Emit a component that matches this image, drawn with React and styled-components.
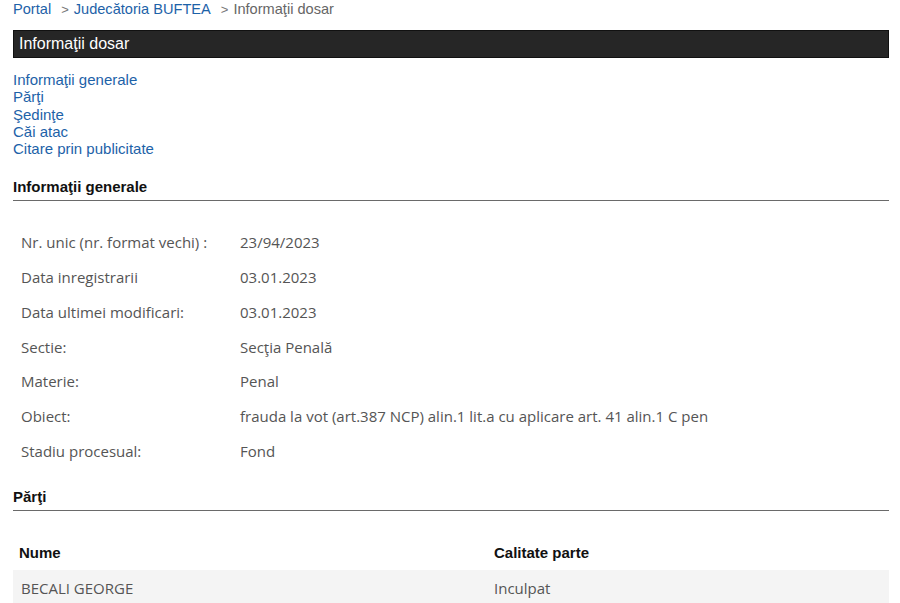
import React from 'react';
import styled, { createGlobalStyle } from 'styled-components';

const GlobalStyle = createGlobalStyle`
  html, body {
    margin: 0;
    padding: 0;
    background: #fff;
  }
  body {
    font-family: "Liberation Sans", Arial, sans-serif;
  }
`;

const Page = styled.div`
  width: 876px;
  padding: 0 11px 0 13px;
  height: 603px;
  overflow: hidden;
`;

const Breadcrumb = styled.div`
  display: flex;
  align-items: baseline;
  gap: 5px;
  padding-top: 1px;
  height: 29px;
  font-size: 14.6px;
  color: #666;
  a {
    color: #1d62a8;
    text-decoration: none;
  }
`;

const Sep = styled.span`
  color: #777;
  font-size: 13px;
  margin-left: 5px;
`;

const TitleBar = styled.div`
  background: #262626;
  border: 1px solid #111;
  color: #fff;
  height: 26px;
  line-height: 26px;
  padding: 0 5px;
  font-size: 16px;
`;

const Menu = styled.ul`
  list-style: none;
  margin: 13px 0 0;
  padding: 0;
  li {
    font-size: 15px;
    line-height: 17.3px;
  }
  a {
    color: #1d62a8;
    text-decoration: none;
  }
`;

const SectionTitle = styled.h3`
  margin: ${p => p.$top}px 0 0;
  padding-bottom: 5px;
  border-bottom: 1px solid #6a6a6a;
  font-size: 15px;
  line-height: 17px;
  font-weight: bold;
  color: #111;
`;

const InfoTable = styled.div`
  display: grid;
  grid-template-columns: 219px 1fr;
  margin-top: 24px;
  padding-left: 8px;
  font-family: "Open Sans", "Noto Sans", sans-serif;
  font-size: 15px;
  color: #555;
  > div {
    height: 34.7px;
    line-height: 34.7px;
    white-space: nowrap;
  }
`;

const PartiTable = styled.div`
  margin-top: 23px;
`;

const PartiRow = styled.div`
  display: grid;
  grid-template-columns: 475px 1fr;
  height: 36px;
  align-items: center;
  padding-left: 6px;
  background: ${p => (p.$shaded ? '#f4f4f4' : 'transparent')};
  font-family: ${p => (p.$head ? '"Liberation Sans", Arial' : '"Open Sans", "Noto Sans"')}, sans-serif;
  font-size: 15px;
  font-weight: ${p => (p.$head ? 'bold' : 'normal')};
  color: ${p => (p.$head ? '#111' : '#555')};
  > span:first-child {
    padding-left: ${p => (p.$head ? 0 : 2)}px;
  }
`;

const info = [
  ['Nr. unic (nr. format vechi) :', '23/94/2023'],
  ['Data inregistrarii', '03.01.2023'],
  ['Data ultimei modificari:', '03.01.2023'],
  ['Sectie:', 'Secţia Penală'],
  ['Materie:', 'Penal'],
  ['Obiect:', 'frauda la vot (art.387 NCP) alin.1 lit.a cu aplicare art. 41 alin.1 C pen'],
  ['Stadiu procesual:', 'Fond'],
];

const menu = ['Informaţii generale', 'Părţi', 'Şedinţe', 'Căi atac', 'Citare prin publicitate'];

export default function App() {
  return (
    <Page>
      <GlobalStyle />
      <Breadcrumb>
        <a href="#">Portal</a>
        <Sep>&gt;</Sep>
        <a href="#">Judecătoria BUFTEA</a>
        <Sep>&gt;</Sep>
        <span>Informaţii dosar</span>
      </Breadcrumb>
      <TitleBar>Informaţii dosar</TitleBar>
      <Menu>
        {menu.map(m => (
          <li key={m}>
            <a href="#">{m}</a>
          </li>
        ))}
      </Menu>
      <SectionTitle $top={21}>Informaţii generale</SectionTitle>
      <InfoTable>
        {info.map(([label, value]) => (
          <React.Fragment key={label}>
            <div>{label}</div>
            <div>{value}</div>
          </React.Fragment>
        ))}
      </InfoTable>
      <SectionTitle $top={20}>Părţi</SectionTitle>
      <PartiTable>
        <PartiRow $head>
          <span>Nume</span>
          <span>Calitate parte</span>
        </PartiRow>
        <PartiRow $shaded>
          <span>BECALI GEORGE</span>
          <span>Inculpat</span>
        </PartiRow>
      </PartiTable>
    </Page>
  );
}
